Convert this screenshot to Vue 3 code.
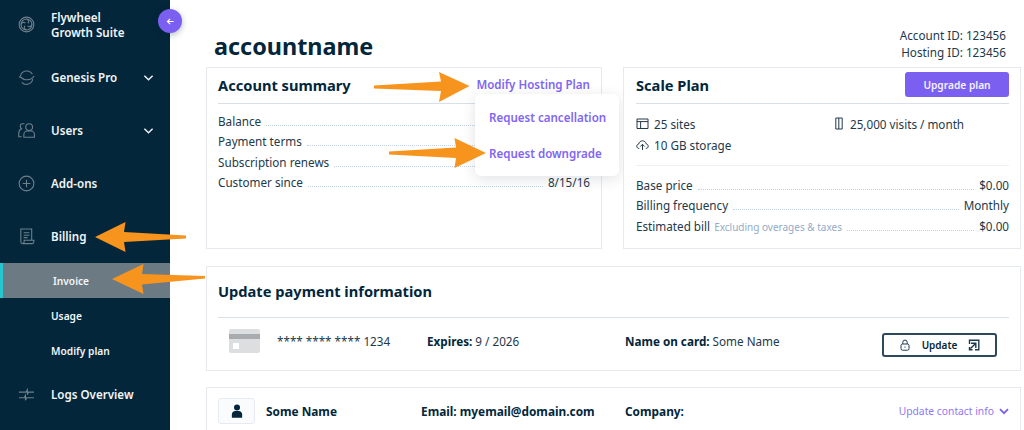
<script setup>
const summary = [
  { label: 'Balance', value: '' },
  { label: 'Payment terms', value: '' },
  { label: 'Subscription renews', value: '' },
  { label: 'Customer since', value: '8/15/16' },
]
const arrows = [
  '374,85.5 441,81.5 439,72 469.5,86 439,102 441,91 374,88.5',
  '389,151.5 456,147.5 454.5,138 486,153 454.5,168 456,158 389,154.5',
  '186,235.5 124,232 125.5,222 95,237 125.5,252 124,242 186,238.5',
  '205,276 142,274 143.5,264 112,279 143.5,294 142,284.5 205,278.5',
]
</script>

<template>
  <div class="page">
    <aside class="sidebar">
      <div class="nav-item first">
        <svg class="nav-icon" viewBox="0 0 18 18"><circle cx="9" cy="9" r="7.8"/><circle cx="9" cy="9" r="5.8"/><path d="M9 3.2c2.600 1 3 3.300 1.400 4.600M14.800 9c-1 2.600-3.300 3-4.600 1.400M9 14.800c-2.600-1-3-3.300-1.400-4.600M3.200 9c1-2.600 3.300-3 4.600-1.400"/></svg>
        <span class="nav-label">Flywheel<br>Growth Suite</span>
      </div>
      <div class="nav-item">
        <svg class="nav-icon" viewBox="0 0 18 18"><path d="M2.600 7.600A6.800 6.800 0 0 1 15.200 5.600M1 8.400c2.800-.6 3 2.400 6.600 2.900 4 .5 7.700-1 9.400-3.900M15.600 10.600A6.800 6.800 0 0 1 4 14.200"/></svg>
        <span class="nav-label">Genesis Pro</span>
        <svg class="chev" viewBox="0 0 12 8"><path d="M1.500 1.500 6 6l4.500-4.500"/></svg>
      </div>
      <div class="nav-item">
        <svg class="nav-icon" viewBox="0 0 18 18"><circle cx="11.800" cy="5.400" r="3.600"/><path d="M6.200 16.200v-2.800c0-2 1.600-3.800 3.400-3.800h4.400c1.900 0 3.400 1.800 3.400 3.800v2.800zM6.800 1.800H4.600C3.200 1.800 2.200 3 2.400 4.800c.1 1 .6 1.800 1.400 2.400C2 8 .8 9.600.8 12v3.600h3"/></svg>
        <span class="nav-label">Users</span>
        <svg class="chev" viewBox="0 0 12 8"><path d="M1.500 1.500 6 6l4.500-4.500"/></svg>
      </div>
      <div class="nav-item">
        <svg class="nav-icon" viewBox="0 0 18 18"><circle cx="9" cy="9" r="7.800"/><path d="M9 5v8M5 9h8"/></svg>
        <span class="nav-label">Add-ons</span>
      </div>
      <div class="nav-item">
        <svg class="nav-icon" viewBox="0 0 18 18"><path d="M3 14.500V1h11.500v12M3 14.500c0 1.200.8 2 2 2h10c1 0 1.800-1 1.800-2.200V13H6.500v1.500c0 1.200-.7 2-1.600 2M6 5h6M6 7.600h6M6 10.200h4"/></svg>
        <span class="nav-label">Billing</span>
      </div>
      <div class="sub-item active">Invoice</div>
      <div class="sub-item">Usage</div>
      <div class="sub-item">Modify plan</div>
      <div class="nav-item">
        <svg class="nav-icon" viewBox="0 0 18 18"><path d="M1 6.500h7.500l1.400-2.500v5l1.300-2.500H17M1 12.500h5.500l1.400-2.500v5l1.300-2.500H17"/></svg>
        <span class="nav-label">Logs Overview</span>
      </div>
      <div class="collapse">
        <svg viewBox="0 0 10 10"><path d="M8.500 5H1.800M4.600 2 1.600 5l3 3"/></svg>
      </div>
    </aside>

    <main class="main">
      <header class="head">
        <h1>accountname</h1>
        <div class="ids">Account ID: 123456<br>Hosting ID: 123456</div>
      </header>

      <div class="top-grid">
        <section class="card summary">
          <div class="card-head">
            <h2>Account summary</h2>
            <a class="link">Modify Hosting Plan</a>
          </div>
          <div class="rows">
            <div v-for="r in summary" :key="r.label" class="row">
              <span>{{ r.label }}</span><i class="dots"></i><span v-if="r.value">{{ r.value }}</span>
            </div>
          </div>
          <div class="popover">
            <a class="link">Request cancellation</a>
            <a class="link">Request downgrade</a>
          </div>
        </section>

        <section class="card plan">
          <div class="card-head">
            <h2>Scale Plan</h2>
            <button class="upgrade">Upgrade plan</button>
          </div>
          <div class="features">
            <div class="feature">
              <svg viewBox="0 0 13 13"><path d="M1 2h11v9.500H1zM1 4.600h11M4.600 4.600v6.900"/></svg>25 sites
            </div>
            <div class="feature visits">
              <svg class="narrow" viewBox="0 0 8 13"><path d="M.8 1h6.400v11H.8zM3.800 1v11"/></svg>25,000 visits / month
            </div>
            <div class="feature">
              <svg viewBox="0 0 13 13"><path d="M3.200 10.500C1.700 10.500.8 9.500.8 8.200c0-1.200.8-2.100 2-2.300C3.200 4 4.700 2.800 6.500 2.800s3.300 1.200 3.700 3.100c1.200.2 2 1.100 2 2.300 0 1.300-.9 2.300-2.400 2.300M6.500 12V6.500M4.300 8.500l2.200-2.200 2.200 2.200"/></svg>10 GB storage
            </div>
          </div>
          <div class="rows prices">
            <div class="row"><span>Base price</span><i class="dots"></i><span>$0.00</span></div>
            <div class="row"><span>Billing frequency</span><i class="dots"></i><span>Monthly</span></div>
            <div class="row"><span>Estimated bill <small>Excluding overages &amp; taxes</small></span><i class="dots"></i><span>$0.00</span></div>
          </div>
        </section>
      </div>

      <section class="card payment">
        <h2>Update payment information</h2>
        <div class="pay-row">
          <div class="credit"><span class="stripe"></span><span class="chip"></span></div>
          <span class="number">**** **** **** 1234</span>
          <span class="expires"><b>Expires:</b> 9 / 2026</span>
          <span class="holder"><b>Name on card:</b> Some Name</span>
          <button class="update">
            <svg viewBox="0 0 12 12"><rect x="2" y="5" width="8" height="6.200" rx="1.500"/><path d="M3.800 5V3.300a2.200 2.200 0 0 1 4.400 0V5M6 7.500v1.200"/></svg>
            Update
            <svg viewBox="0 0 12 12" class="ext"><path d="M1.500 5V1.200h9.300v9.600H7M3 4.200h4.800V9M7.600 4.400 2.500 9.500M1.500 8v2.800h3"/></svg>
          </button>
        </div>
      </section>

      <section class="card contact">
        <div class="avatar">
          <svg viewBox="0 0 14 16"><circle cx="7" cy="4" r="3.500"/><path d="M1 16v-4c0-2.500 2-4 3.500-4h5C11 8 13 9.500 13 12v4z"/></svg>
        </div>
        <b class="c-name">Some Name</b>
        <b class="c-email">Email: myemail@domain.com</b>
        <b class="c-company">Company:</b>
        <a class="c-update">Update contact info
          <svg viewBox="0 0 10 7"><path d="M1 1.200 5 5.200l4-4"/></svg>
        </a>
      </section>
    </main>

    <svg class="arrows" viewBox="0 0 1024 430">
      <polygon v-for="a in arrows" :key="a" :points="a"/>
    </svg>
  </div>
</template>

<style>
html, body { margin: 0; height: 430px; overflow: hidden; background: #fff; }
</style>

<style scoped>
.page {
  position: relative;
  display: flex;
  width: 1024px;
  height: 430px;
  overflow: hidden;
  font-family: "Noto Sans", "Open Sans", sans-serif;
  font-size: 11.700px;
  color: #22394a;
  background: #fff;
}
.sidebar {
  position: relative;
  flex: 0 0 170px;
  background: #03263b;
  color: #f2f5f7;
  display: flex;
  flex-direction: column;
}
.nav-item {
  flex: 0 0 53px;
  display: flex;
  align-items: center;
  padding-left: 18px;
  font-weight: 600;
  font-size: 11.600px;
  line-height: 15px;
}
.nav-item.first { margin-top: -2px; }
.nav-icon {
  width: 17px;
  height: 17px;
  margin-right: 16px;
  fill: none;
  stroke: #6f808b;
  stroke-width: 1.150;
}
.chev {
  width: 11px;
  height: 8px;
  margin-left: auto;
  margin-right: 16px;
  fill: none;
  stroke: #eef2f5;
  stroke-width: 1.600;
}
.sub-item {
  flex: 0 0 35px;
  display: flex;
  align-items: center;
  padding-left: 51px;
  font-size: 10.200px;
  font-weight: 600;
}
.sub-item.active {
  background: #6c7a84;
  border-left: 3px solid #26c6d0;
  padding-left: 50px;
}
.collapse {
  position: absolute;
  top: 9px;
  left: 158px;
  width: 24px;
  height: 24px;
  border-radius: 50%;
  background: #7b5ff1;
  box-shadow: 0 2px 6px rgba(3, 38, 59, .3);
  display: flex;
  align-items: center;
  justify-content: center;
}
.collapse svg {
  width: 9px;
  height: 9px;
  fill: none;
  stroke: #fff;
  stroke-width: 1.300;
}
.main {
  flex: 1;
  padding-left: 36px;
  padding-right: 3px;
  display: flex;
  flex-direction: column;
}
.head {
  flex: 0 0 67px;
  display: flex;
  justify-content: space-between;
  align-items: flex-start;
  padding-left: 8px;
  padding-right: 15px;
}
h1 {
  margin: 30px 0 0;
  font-size: 23.400px;
  line-height: 33px;
  font-weight: 700;
  color: #03263b;
}
.ids {
  margin-top: 27px;
  text-align: right;
  font-size: 11.700px;
  line-height: 17px;
}
.top-grid {
  display: grid;
  grid-template-columns: 396px 398px;
  justify-content: space-between;
  flex: 0 0 182px;
}
.card {
  border: 1px solid #e6e9ed;
  box-sizing: border-box;
  background: #fff;
}
.summary, .plan {
  position: relative;
  display: flex;
  flex-direction: column;
}
.summary { padding: 0 11px; }
.plan { padding: 0 11px 0 12px; }
.card-head {
  flex: 0 0 36px;
  display: flex;
  justify-content: space-between;
  align-items: center;
  padding-bottom: 2px;
  border-bottom: 1px solid #d8e0ea;
  box-sizing: border-box;
}
h2 {
  margin: 0;
  font-size: 14.650px;
  font-weight: 700;
  color: #03263b;
}
.link {
  color: #8066f3;
  font-weight: 600;
  font-size: 11.550px;
}
.rows {
  padding-top: 7px;
  display: flex;
  flex-direction: column;
}
.row {
  display: flex;
  align-items: baseline;
  height: 20.400px;
  line-height: 20.400px;
}
.dots {
  flex: 1;
  margin: 0 5px;
  border-bottom: 1px dotted #c4d2e6;
}
small {
  font-size: 10px;
  color: #93abc7;
  margin-left: 1px;
}
.popover {
  position: absolute;
  top: 26px;
  left: 268px;
  width: 144px;
  height: 82px;
  box-sizing: border-box;
  padding: 15px 0 0 14px;
  background: #fff;
  border-radius: 6px;
  box-shadow: 0 3px 14px rgba(40, 50, 70, .14);
  display: flex;
  flex-direction: column;
  gap: 19px;
  line-height: 17px;
}
.upgrade {
  flex: 0 0 104px;
  height: 25px;
  border: 0;
  border-radius: 3px;
  background: #7b5ff1;
  color: #f4f2fe;
  font: 600 10.200px "Noto Sans", sans-serif;
}
.features {
  flex: 0 0 62px;
  box-sizing: border-box;
  display: grid;
  grid-template-columns: 199px 1fr;
  grid-auto-rows: 17px;
  row-gap: 4px;
  align-content: start;
  padding-top: 11px;
  border-bottom: 1px solid #eef0f3;
}
.feature {
  display: flex;
  align-items: center;
  gap: 5px;
  height: 17px;
}
.feature svg {
  width: 13px;
  height: 13px;
  fill: none;
  stroke: #22394a;
  stroke-width: 1;
}
.feature svg.narrow { width: 8px; margin-right: 2px; }
.rows.prices { padding-top: 9px; }
.payment { margin-top: 17px; padding: 0 11px; flex: 0 0 105px; }
.payment h2 {
  height: 51px;
  line-height: 49px;
  border-bottom: 1px solid #d8e0ea;
  box-sizing: border-box;
}
.pay-row {
  position: relative;
  display: grid;
  grid-template-columns: 11px 31px 17px 150px 198px 257px 115px;
  height: 52px;
  align-items: center;
}
.credit {
  grid-column: 2;
  position: relative;
  height: 24px;
  margin-top: -6px;
  background: #dcdedf;
  border-radius: 2px;
}
.stripe { position: absolute; left: 0; right: 0; top: 5px; height: 5px; background: #a9acae; }
.chip { position: absolute; left: 4px; top: 14px; width: 6px; height: 6px; background: #fff; }
.number { grid-column: 4; margin-top: -6px; }
.expires { grid-column: 5; margin-top: -6px; }
.holder { grid-column: 6; margin-top: -6px; }
b { font-weight: 700; color: #03263b; }
.update {
  grid-column: 7;
  height: 24px;
  width: 115px;
  margin-top: 2px;
  border: 2px solid #2c4a5c;
  border-radius: 3px;
  background: #fff;
  color: #03263b;
  font: 600 10px "Noto Sans", sans-serif;
  display: flex;
  align-items: center;
  justify-content: center;
  gap: 11px;
  padding: 0;
}
.update svg {
  width: 12px;
  height: 12px;
  fill: none;
  stroke: #1b3a4e;
  stroke-width: 1;
}
.update .ext { stroke-width: 1.400; }
.contact {
  margin-top: 16px;
  flex: 0 0 60px;
  display: grid;
  grid-template-columns: 37px 166px 204px 1fr auto;
  align-items: center;
  align-self: stretch;
  padding: 10px 11px 0;
  align-content: start;
  box-sizing: border-box;
  font-size: 11.850px;
}
.avatar {
  width: 37px;
  height: 26px;
  border: 1px solid #e7ebf1;
  border-radius: 3px;
  box-sizing: border-box;
  display: flex;
  align-items: center;
  justify-content: center;
  background: #fafbfc;
}
.avatar svg { width: 12px; height: 14px; fill: #03263b; }
.c-name { padding-left: 11px; }
.c-update {
  color: #8f78f4;
  font-size: 10.300px;
  display: flex;
  align-items: center;
  gap: 5px;
}
.c-update svg {
  width: 10px;
  height: 7px;
  fill: none;
  stroke: #7b5ff1;
  stroke-width: 1.800;
}
.arrows {
  position: absolute;
  left: 0;
  top: 0;
  width: 1024px;
  height: 430px;
  pointer-events: none;
}
.arrows polygon { fill: #f7941d; }
</style>
